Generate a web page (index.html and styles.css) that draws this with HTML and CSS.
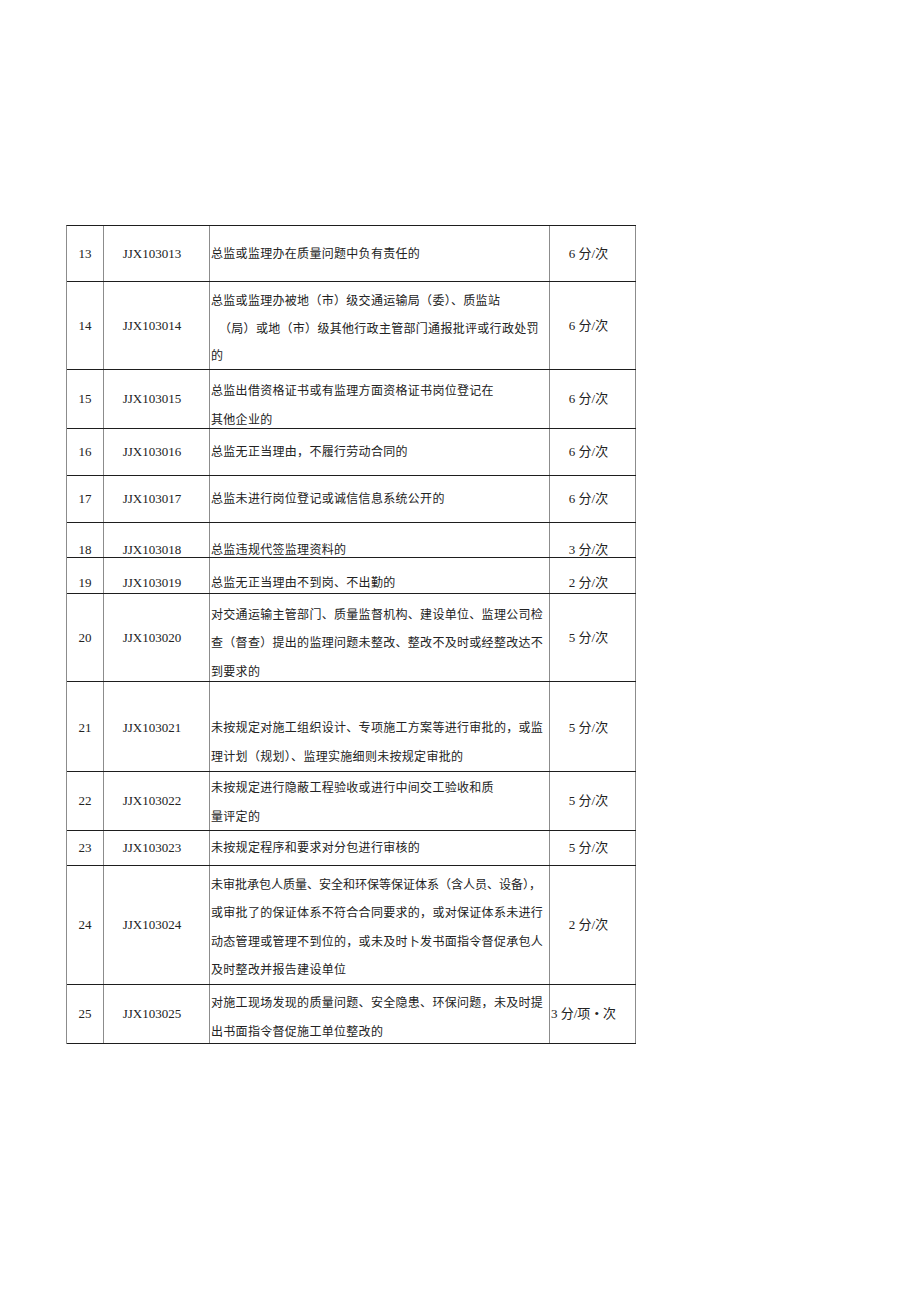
FILE: index.html
```html
<!DOCTYPE html>
<html lang="zh-CN">
<head>
<meta charset="utf-8">
<title>监理扣分标准</title>
<link rel="stylesheet" href="styles.css">
</head>
<body>
<div class="page">
  <div class="tbl">
    <div class="row r13">
      <div class="cell num">13</div>
      <div class="cell code">JJX103013</div>
      <div class="cell desc mid"><span class="ln">总监或监理办在质量问题中负有责任的</span></div>
      <div class="cell score">6 分/次</div>
    </div>
    <div class="row r14">
      <div class="cell num">14</div>
      <div class="cell code">JJX103014</div>
      <div class="cell desc">
        <span class="ln">总监或监理办被地（市）级交通运输局（委）、质监站</span>
        <span class="ln indent">（局）或地（市）级其他行政主管部门通报批评或行政处罚</span>
        <span class="ln">的</span>
      </div>
      <div class="cell score">6 分/次</div>
    </div>
    <div class="row r15">
      <div class="cell num">15</div>
      <div class="cell code">JJX103015</div>
      <div class="cell desc">
        <span class="ln">总监出借资格证书或有监理方面资格证书岗位登记在</span>
        <span class="ln">其他企业的</span>
      </div>
      <div class="cell score">6 分/次</div>
    </div>
    <div class="row r16">
      <div class="cell num">16</div>
      <div class="cell code">JJX103016</div>
      <div class="cell desc mid"><span class="ln">总监无正当理由，不履行劳动合同的</span></div>
      <div class="cell score">6 分/次</div>
    </div>
    <div class="row r17">
      <div class="cell num">17</div>
      <div class="cell code">JJX103017</div>
      <div class="cell desc mid"><span class="ln">总监未进行岗位登记或诚信信息系统公开的</span></div>
      <div class="cell score">6 分/次</div>
    </div>
    <div class="row r18 low">
      <div class="cell num">18</div>
      <div class="cell code">JJX103018</div>
      <div class="cell desc"><span class="ln">总监违规代签监理资料的</span></div>
      <div class="cell score">3 分/次</div>
    </div>
    <div class="row r19 low">
      <div class="cell num">19</div>
      <div class="cell code">JJX103019</div>
      <div class="cell desc"><span class="ln">总监无正当理由不到岗、不出勤的</span></div>
      <div class="cell score">2 分/次</div>
    </div>
    <div class="row r20">
      <div class="cell num">20</div>
      <div class="cell code">JJX103020</div>
      <div class="cell desc">
        <span class="ln">对交通运输主管部门、质量监督机构、建设单位、监理公司检</span>
        <span class="ln">查（督查）提出的监理问题未整改、整改不及时或经整改达不</span>
        <span class="ln">到要求的</span>
      </div>
      <div class="cell score">5 分/次</div>
    </div>
    <div class="row r21">
      <div class="cell num">21</div>
      <div class="cell code">JJX103021</div>
      <div class="cell desc">
        <span class="ln">未按规定对施工组织设计、专项施工方案等进行审批的，或监</span>
        <span class="ln">理计划（规划）、监理实施细则未按规定审批的</span>
      </div>
      <div class="cell score">5 分/次</div>
    </div>
    <div class="row r22">
      <div class="cell num">22</div>
      <div class="cell code">JJX103022</div>
      <div class="cell desc">
        <span class="ln">未按规定进行隐蔽工程验收或进行中间交工验收和质</span>
        <span class="ln">量评定的</span>
      </div>
      <div class="cell score">5 分/次</div>
    </div>
    <div class="row r23">
      <div class="cell num">23</div>
      <div class="cell code">JJX103023</div>
      <div class="cell desc mid"><span class="ln">未按规定程序和要求对分包进行审核的</span></div>
      <div class="cell score">5 分/次</div>
    </div>
    <div class="row r24">
      <div class="cell num">24</div>
      <div class="cell code">JJX103024</div>
      <div class="cell desc">
        <span class="ln tight">未审批承包人质量、安全和环保等保证体系（含人员、设备），</span>
        <span class="ln">或审批了的保证体系不符合合同要求的，或对保证体系未进行</span>
        <span class="ln">动态管理或管理不到位的，或未及时卜发书面指令督促承包人</span>
        <span class="ln">及时整改并报告建设单位</span>
      </div>
      <div class="cell score">2 分/次</div>
    </div>
    <div class="row r25">
      <div class="cell num">25</div>
      <div class="cell code">JJX103025</div>
      <div class="cell desc">
        <span class="ln">对施工现场发现的质量问题、安全隐患、环保问题，未及时提</span>
        <span class="ln">出书面指令督促施工单位整改的</span>
      </div>
      <div class="cell score left">3 分/项<span class="dot">•</span>次</div>
    </div>
  </div>
</div>
</body>
</html>
```
FILE: styles.css
```css
html, body {
  margin: 0;
  padding: 0;
  background: #ffffff;
}

.page {
  padding: 225px 0 0 66px;
}

.tbl {
  width: 570px;
  box-sizing: border-box;
  border-top: 1px solid #1e1e1e;
  border-left: 1px solid #8c8c8c;
  font-family: "Liberation Serif", "Noto Sans CJK SC", serif;
  color: #222222;
}

.row {
  display: grid;
  grid-template-columns: 37px 106px 340px 86px;
  grid-template-rows: minmax(0, 1fr);
  box-sizing: border-box;
  border-bottom: 1px solid #1e1e1e;
}

.cell {
  box-sizing: border-box;
  min-height: 0;
  border-right: 1px solid #8c8c8c;
  display: flex;
  align-items: center;
  justify-content: center;
  font-size: 13px;
  line-height: 14px;
  white-space: nowrap;
}

.code {
  padding-right: 9px;
}

.score {
  padding-right: 8px;
}

.score.left {
  justify-content: flex-start;
  padding-right: 0;
  padding-left: 1px;
}

.dot {
  padding: 0 4px;
}

.desc {
  flex-direction: column;
  align-items: flex-start;
  justify-content: flex-start;
  padding-left: 1px;
  font-size: 12px;
  letter-spacing: 0.3px;
  line-height: 28px;
}

.desc.mid {
  justify-content: center;
}

.ln {
  display: block;
}

.ln.indent {
  padding-left: 8px;
}

.ln.tight {
  letter-spacing: 0;
}

.low .cell {
  align-items: flex-end;
}

.low .desc {
  align-items: flex-start;
  justify-content: flex-end;
  line-height: 14px;
}

/* row heights (bottom border included) and text placement */
.r13 { height: 56px; }
.r14 { height: 88px; }
.r15 { height: 59px; }
.r16 { height: 47px; }
.r17 { height: 47px; }
.r18 { height: 35px; }
.r19 { height: 36px; }
.r20 { height: 88px; }
.r21 { height: 90px; }
.r22 { height: 59px; }
.r23 { height: 35px; }
.r24 { height: 119px; }
.r25 { height: 59px; }

.r14 .desc { padding-top: 6px; line-height: 27.5px; }
.r15 .desc { padding-top: 6.5px; line-height: 29px; }
.r19 .cell { padding-bottom: 3px; }
.r20 .desc { padding-top: 6.5px; line-height: 28.5px; }
.r21 .desc { padding-top: 31.5px; line-height: 29px; }
.r21 .num, .r21 .code, .r21 .score { padding-top: 3px; }
.r22 .desc { padding-top: 1.5px; line-height: 29px; }
.r24 .desc { padding-top: 4.8px; line-height: 28.4px; }
.r25 .desc { padding-top: 3.5px; line-height: 29px; }
```
